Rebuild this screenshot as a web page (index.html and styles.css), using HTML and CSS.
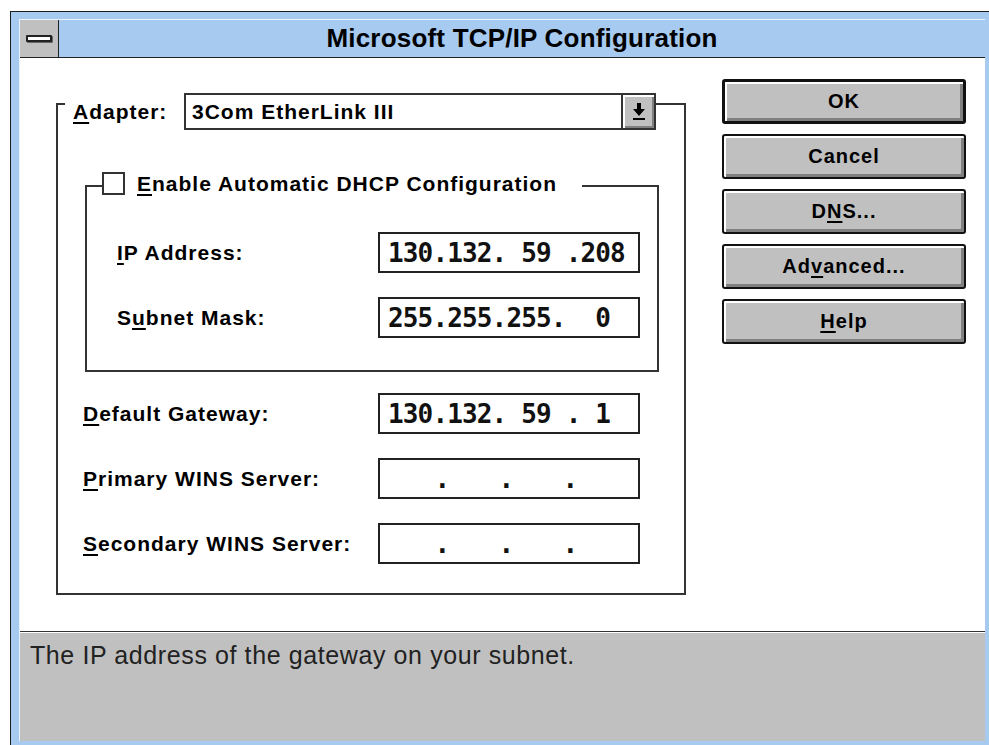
FILE: index.html
```html
<!DOCTYPE html>
<html lang="en">
<head>
<meta charset="utf-8">
<title>Microsoft TCP/IP Configuration</title>
<link rel="stylesheet" href="styles.css">
</head>
<body>
<div class="window">
  <div class="frame">
    <div class="titlebar">
      <div class="sysmenu"><span class="sysmenu-bar"></span></div>
      <div class="title">Microsoft TCP/IP Configuration</div>
    </div>
    <div class="client">
      <div class="main">
        <div class="group group-adapter">
          <div class="group-head head-adapter">
            <span class="label"><u>A</u>dapter:</span>
            <div class="combo">
              <span class="combo-text">3Com EtherLink III</span>
              <span class="combo-btn">
                <svg width="16" height="19" viewBox="0 0 16 19">
                  <path d="M6 1h4v6h4l-6 7-6-7h4z" fill="#000"/>
                  <rect x="2" y="16" width="12" height="2" fill="#000"/>
                </svg>
              </span>
            </div>
          </div>
          <div class="group group-dhcp">
            <div class="group-head head-dhcp">
              <span class="checkbox"></span>
              <span class="label"><u>E</u>nable Automatic DHCP Configuration</span>
            </div>
            <div class="row row-first">
              <span class="label label-inner"><u>I</u>P Address:</span>
              <div class="ip-field">130.132. 59 .208</div>
            </div>
            <div class="row">
              <span class="label label-inner">S<u>u</u>bnet Mask:</span>
              <div class="ip-field">255.255.255.  0</div>
            </div>
          </div>
          <div class="row row-gateway">
            <span class="label label-outer"><u>D</u>efault Gateway:</span>
            <div class="ip-field">130.132. 59 . 1</div>
          </div>
          <div class="row">
            <span class="label label-outer"><u>P</u>rimary WINS Server:</span>
            <div class="ip-field ip-empty"><span>.</span><span>.</span><span>.</span></div>
          </div>
          <div class="row">
            <span class="label label-outer"><u>S</u>econdary WINS Server:</span>
            <div class="ip-field ip-empty"><span>.</span><span>.</span><span>.</span></div>
          </div>
        </div>
      </div>
      <div class="buttons">
        <button class="btn btn-default">OK</button>
        <button class="btn">Cancel</button>
        <button class="btn">D<u>N</u>S...</button>
        <button class="btn">Ad<u>v</u>anced...</button>
        <button class="btn"><u>H</u>elp</button>
      </div>
    </div>
    <div class="status">The IP address of the gateway on your subnet.</div>
  </div>
</div>
</body>
</html>
```

FILE: styles.css
```css
html, body {
  margin: 0;
  padding: 0;
}

body {
  width: 989px;
  height: 745px;
  overflow: hidden;
  background: #ffffff;
  font-family: "Liberation Sans", Arial, sans-serif;
  color: #000;
}

/* outer sizing frame of the dialog */
.window {
  box-sizing: border-box;
  width: 1000px;
  height: 760px;
  margin: 11px 0 0 10px;
  padding: 7px 0 0 8px;
  border-top: 1px solid #1c1c1c;
  border-left: 1px solid #1c1c1c;
  background: #a6caf0;
}

.frame {
  width: 965px;
  border-top: 1px solid #eaf2fb;
  border-left: 1px solid #eaf2fb;
}

/* caption */
.titlebar {
  display: flex;
  height: 37px;
  border-bottom: 1px solid #222;
  background: #a6caf0;
}

.sysmenu {
  width: 38px;
  border-right: 1px solid #222;
  background: #c0c0c0;
  display: flex;
  align-items: center;
  justify-content: center;
}

.sysmenu-bar {
  box-sizing: border-box;
  width: 26px;
  height: 7px;
  border: 2px solid #222;
  border-radius: 1px;
  background: #fff;
  box-shadow: 1px 1px 0 #666;
}

.title {
  flex: 1;
  text-align: center;
  font-weight: bold;
  font-size: 26px;
  line-height: 37px;
  letter-spacing: 0.2px;
}

/* dialog body */
.client {
  display: flex;
  align-items: flex-start;
  height: 573px;
  padding: 0 19px 0 36px;
  background: #fff;
}

.main {
  margin-top: 45px;
  width: 630px;
}

.label {
  font-weight: bold;
  font-size: 21px;
  letter-spacing: 1px;
  white-space: pre;
}

u {
  text-decoration-thickness: 2px;
  text-underline-offset: 3px;
}

.group {
  box-sizing: border-box;
  border: 2px solid #333;
}

.group-adapter {
  padding: 0 25px 29px 25px;
}

.group-head {
  display: flex;
  align-items: center;
  background: #fff;
}

.head-adapter {
  margin: -12px 0 0 -18px;
  width: 591px;
  height: 37px;
  padding-left: 8px;
  box-sizing: border-box;
}

.combo {
  margin-left: auto;
  box-sizing: border-box;
  width: 472px;
  height: 37px;
  border: 2px solid #333;
  display: flex;
}

.combo-text {
  flex: 1;
  padding-left: 6px;
  font-weight: bold;
  font-size: 21px;
  letter-spacing: 1px;
  line-height: 33px;
}

.combo-btn {
  width: 31px;
  border-left: 2px solid #333;
  background: #c0c0c0;
  box-shadow: inset 2px 2px 0 #fff, inset -2px -2px 0 #808080;
  display: flex;
  align-items: center;
  justify-content: center;
}

.group-dhcp {
  width: 574px;
  margin: 55px 0 0 2px;
  padding: 0 0 32px 30px;
}

.head-dhcp {
  width: fit-content;
  height: 23px;
  margin: -15px 0 0 -15px;
  padding-right: 25px;
}

.checkbox {
  box-sizing: border-box;
  width: 23px;
  height: 23px;
  border: 2px solid #333;
  background: #fff;
}

.head-dhcp .label {
  margin-left: 12px;
}

.row {
  display: flex;
  align-items: center;
  margin-top: 24px;
}

.row-first {
  margin-top: 37px;
}

.row-gateway {
  margin-top: 21px;
}

.label-inner {
  width: 261px;
}

.label-outer {
  width: 295px;
}

.ip-field {
  box-sizing: border-box;
  width: 262px;
  height: 41px;
  border: 2px solid #222;
  padding-left: 8px;
  display: flex;
  align-items: center;
  font-family: "DejaVu Sans Mono", "Liberation Mono", monospace;
  font-weight: bold;
  font-size: 26px;
  letter-spacing: -0.85px;
  white-space: pre;
  color: #111;
}

.ip-empty {
  padding-left: 30px;
}

.ip-empty span {
  width: 64px;
  text-align: center;
}

/* push buttons */
.buttons {
  margin: 21px 0 0 36px;
  display: flex;
  flex-direction: column;
  gap: 10px;
  width: 244px;
}

.btn {
  box-sizing: border-box;
  height: 45px;
  border: 2px solid #111;
  border-radius: 3px;
  background: #c0c0c0;
  box-shadow: inset 2px 2px 0 #fff, inset -3px -3px 0 #808080;
  font-family: "Liberation Sans", Arial, sans-serif;
  font-weight: bold;
  font-size: 20px;
  letter-spacing: 1px;
  color: #000;
  padding: 0;
}

.btn-default {
  border-width: 3px;
}

/* hint line along the bottom */
.status {
  box-sizing: content-box;
  height: 101px;
  padding: 8px 0 0 10px;
  border-top: 1px solid #333;
  box-shadow: inset 0 1px 0 #fff;
  background: #c0c0c0;
  font-size: 25px;
  line-height: 30px;
  letter-spacing: 0.6px;
  color: #222;
}
```
